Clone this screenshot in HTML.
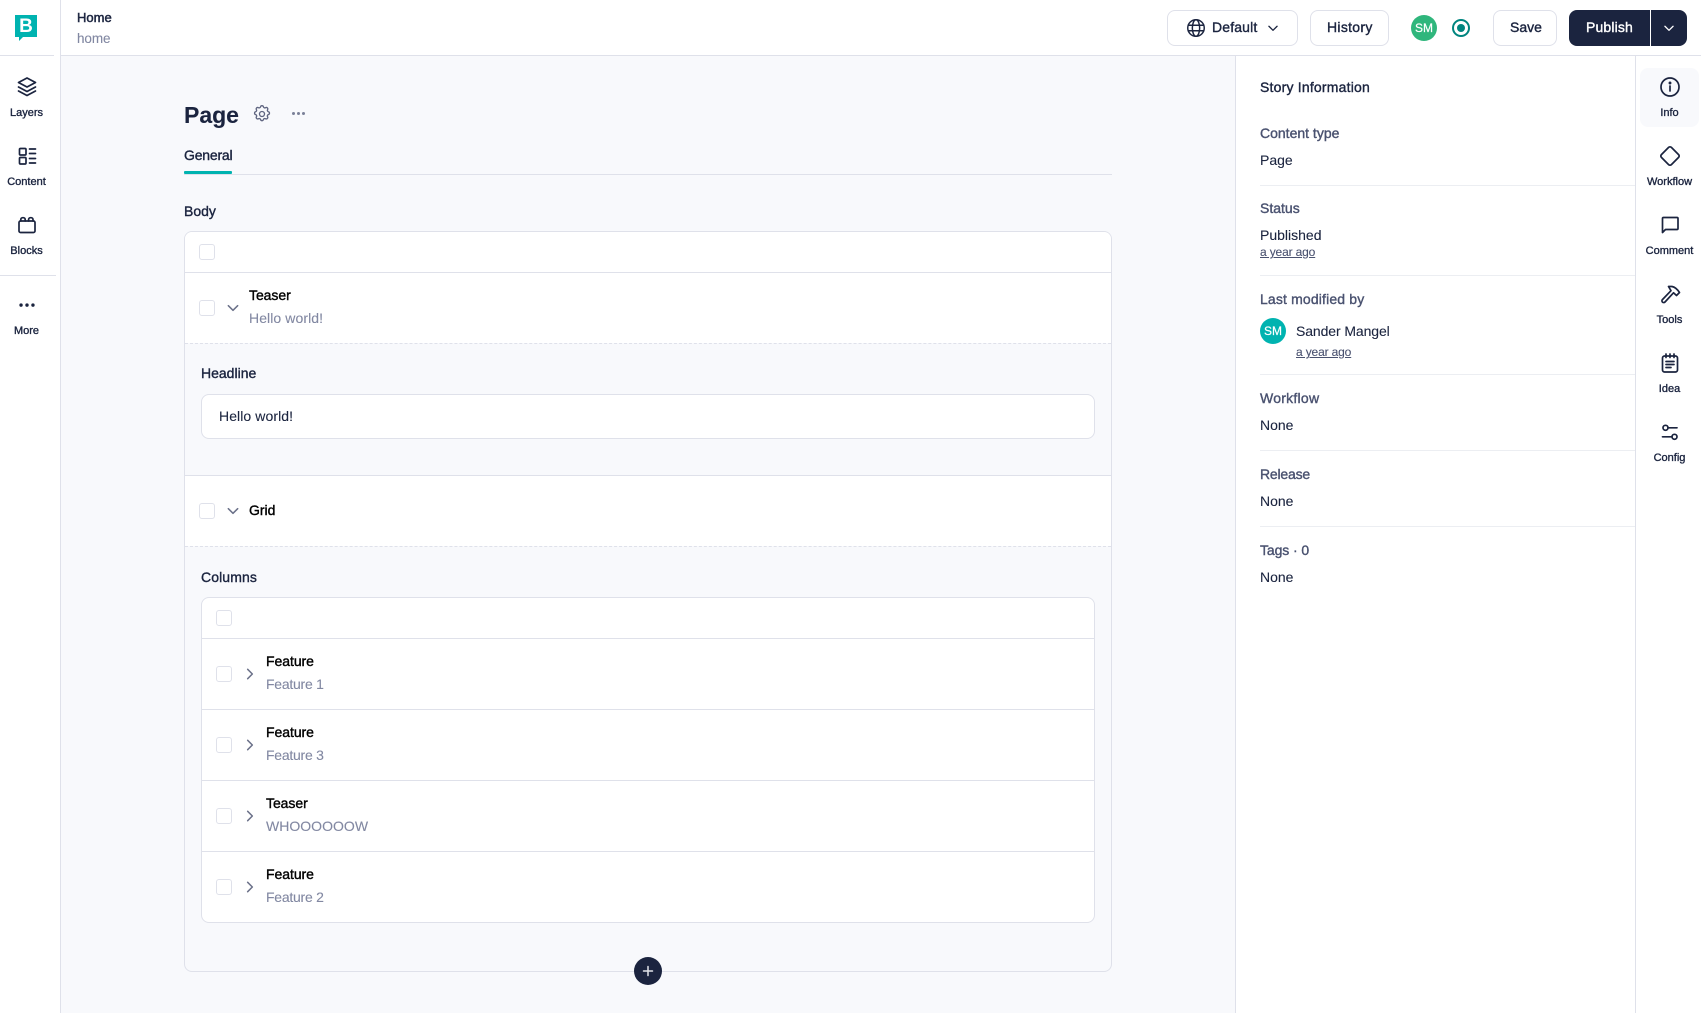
<!DOCTYPE html>
<html lang="en"><head><meta charset="utf-8"><title>Page</title>
<style>
html,body{margin:0;padding:0;width:1701px;height:1013px;overflow:hidden;background:#f8f9fc;font-family:"Liberation Sans",sans-serif;color:#1b243f}
*{box-sizing:border-box}
.a{position:absolute}
.t{position:absolute;white-space:nowrap;transform:translateY(-50%);font-size:14px;line-height:18px;-webkit-text-stroke:.1px currentColor}
.m{-webkit-text-stroke:.38px currentColor}
.k{color:#000}
.g{color:#8288a2;letter-spacing:-.1px}
.l{color:#4a5270}
.c{transform:translate(-50%,-50%);font-size:11px;-webkit-text-stroke:.35px currentColor}
.u{font-size:12px;text-decoration:underline;color:#4a5270;letter-spacing:-.15px}
.b{position:absolute;background:#dfe1ea}
.cb{position:absolute;width:16px;height:16px;border:1px solid #dfe1ea;border-radius:3px;background:#fff}
.btn{position:absolute;top:10px;height:36px;background:#fff;border:1px solid #dfe1ea;border-radius:8px}
svg{position:absolute;overflow:visible;fill:none;stroke:#1b243f;stroke-width:1.7;stroke-linecap:round;stroke-linejoin:round}
.ic{width:22px;height:22px}
.sm{stroke:#6b7189;width:14px;height:14px;stroke-width:2.6}
</style></head><body>

<!-- header -->
<div class="a" style="left:0;top:0;width:1701px;height:56px;background:#fff"></div>
<div class="a" style="left:0;top:56px;width:60px;height:957px;background:#fff"></div>
<div class="b" style="left:60px;top:55px;width:1641px;height:1px"></div>
<div class="b" style="left:0;top:55px;width:54px;height:1px"></div>
<div class="b" style="left:60px;top:0;width:1px;height:1013px"></div>
<div class="b" style="left:0;top:275px;width:56px;height:1px"></div>

<!-- logo -->
<div class="a" style="left:15px;top:15px;width:22px;height:22px;background:#00b3b0"></div>
<div class="a" style="left:19px;top:37px;width:0;height:0;border-top:4px solid #00b3b0;border-right:4px solid transparent"></div>
<div class="a" style="left:15px;top:15px;width:22px;height:22px;line-height:23px;text-align:center;color:#fff;font-weight:700;font-size:19px">B</div>

<div class="t m" style="left:77px;top:18px;font-size:13px;-webkit-text-stroke:.5px currentColor">Home</div>
<div class="t g" style="left:77px;top:39px;font-size:13.5px">home</div>

<!-- left rail -->
<svg class="ic" style="left:16px;top:76px" viewBox="0 0 22 22"><path d="M11 2l-8.500 4.500l8.500 4.500l8.500-4.500z"/><path d="M2.500 11l8.500 4.500l8.500-4.500"/><path d="M2.500 15l8.500 4.500l8.500-4.500"/></svg>
<div class="t c" style="left:26.5px;top:113px">Layers</div>
<svg class="ic" style="left:16px;top:145px" viewBox="0 0 22 22"><rect x="3.500" y="3.500" width="6.500" height="6.500" rx="1"/><rect x="3.500" y="12.500" width="6.500" height="6.500" rx="1"/><path d="M13.500 4h6M13.500 8.500h6M13.500 13.500h6M13.500 18h6"/></svg>
<div class="t c" style="left:26.5px;top:182px">Content</div>
<svg class="ic" style="left:16px;top:214px" viewBox="0 0 22 22"><rect x="3" y="7" width="16" height="11.500" rx="1.500"/><path d="M4.800 7V5.500a1.800 1.800 0 0 1 1.800-1.800h.8a1.800 1.800 0 0 1 1.800 1.800V7M12.600 7V5.500a1.800 1.800 0 0 1 1.800-1.800h.8a1.800 1.800 0 0 1 1.800 1.800V7"/></svg>
<div class="t c" style="left:26.5px;top:251px">Blocks</div>
<svg class="ic" style="left:16px;top:295px" viewBox="0 0 24 24"><circle cx="5.500" cy="11" r="1" fill="#1b243f"/><circle cx="12" cy="11" r="1" fill="#1b243f"/><circle cx="18.500" cy="11" r="1" fill="#1b243f"/></svg>
<div class="t c" style="left:26.5px;top:331px">More</div>

<!-- header right -->
<div class="btn" style="left:1167px;width:131px"></div>
<svg class="ic" style="left:1185px;top:17px;stroke-width:1.6" viewBox="0 0 24 24"><circle cx="12" cy="12" r="9"/><ellipse cx="12" cy="12" rx="4" ry="9"/><path d="M3.500 9h17M3.500 15h17"/></svg>
<div class="t m" style="left:1212px;top:27px;letter-spacing:.15px">Default</div>
<svg class="sm" style="left:1266px;top:21px;stroke:#1b243f;stroke-width:2.2" viewBox="0 0 24 24"><path d="M5 9l7 7l7-7"/></svg>
<div class="btn" style="left:1310px;width:79px"></div>
<div class="t m" style="left:1327px;top:27px;letter-spacing:.3px">History</div>
<div class="a" style="left:1411px;top:15px;width:26px;height:26px;border-radius:50%;background:#2fb67c;color:#fff;font-size:12px;line-height:27px;text-align:center;-webkit-text-stroke:.2px #fff">SM</div>
<div class="a" style="left:1452px;top:19px;width:18px;height:18px;border-radius:50%;border:2px solid #00857f"></div>
<div class="a" style="left:1457px;top:24px;width:8px;height:8px;border-radius:50%;background:#00857f"></div>
<div class="btn" style="left:1493px;width:64px"></div>
<div class="t m" style="left:1510px;top:27px">Save</div>
<div class="a" style="left:1569px;top:10px;width:81px;height:36px;background:#1b243f;border-radius:8px 0 0 8px"></div>
<div class="a" style="left:1651px;top:10px;width:36px;height:36px;background:#1b243f;border-radius:0 8px 8px 0"></div>
<div class="t m" style="left:1586px;top:27px;color:#fff;letter-spacing:.15px">Publish</div>
<svg class="sm" style="left:1662px;top:21px;stroke:#fff;stroke-width:2.2" viewBox="0 0 24 24"><path d="M5 9l7 7l7-7"/></svg>

<!-- right panel -->
<div class="a" style="left:1236px;top:56px;width:465px;height:957px;background:#fff"></div>
<div class="b" style="left:1235px;top:56px;width:1px;height:957px"></div>
<div class="b" style="left:1635px;top:56px;width:1px;height:957px"></div>
<div class="a" style="left:1640px;top:68px;width:59px;height:59px;background:#f8f9fc;border-radius:8px"></div>

<div class="t m" style="left:1260px;top:87px;letter-spacing:.2px">Story Information</div>
<div class="t l m" style="left:1260px;top:133px">Content type</div>
<div class="t" style="left:1260px;top:160px">Page</div>
<div class="a" style="left:1260px;top:185px;width:375px;height:1px;background:#eceef2"></div>
<div class="t l m" style="left:1260px;top:208px">Status</div>
<div class="t" style="left:1260px;top:235px">Published</div>
<div class="t u" style="left:1260px;top:252px">a year ago</div>
<div class="a" style="left:1260px;top:275px;width:375px;height:1px;background:#eceef2"></div>
<div class="t l m" style="left:1260px;top:299px;letter-spacing:.15px">Last modified by</div>
<div class="a" style="left:1260px;top:318px;width:26px;height:26px;border-radius:50%;background:#00b3b0;color:#fff;font-size:12px;line-height:27px;text-align:center;-webkit-text-stroke:.2px #fff">SM</div>
<div class="t" style="left:1296px;top:331px;letter-spacing:-.1px">Sander Mangel</div>
<div class="t u" style="left:1296px;top:352px">a year ago</div>
<div class="a" style="left:1260px;top:374px;width:375px;height:1px;background:#eceef2"></div>
<div class="t l m" style="left:1260px;top:398px;letter-spacing:.25px">Workflow</div>
<div class="t" style="left:1260px;top:425px">None</div>
<div class="a" style="left:1260px;top:450px;width:375px;height:1px;background:#eceef2"></div>
<div class="t l m" style="left:1260px;top:474px;letter-spacing:-.2px">Release</div>
<div class="t" style="left:1260px;top:501px">None</div>
<div class="a" style="left:1260px;top:526px;width:375px;height:1px;background:#eceef2"></div>
<div class="t l m" style="left:1260px;top:550px;letter-spacing:-.1px">Tags · 0</div>
<div class="t" style="left:1260px;top:577px">None</div>

<!-- right rail -->
<svg class="ic" style="left:1659px;top:76px" viewBox="0 0 22 22"><circle cx="11" cy="11" r="9"/><path d="M11 10v5"/><circle cx="11" cy="7" r=".6" fill="#1b243f"/></svg>
<div class="t c" style="left:1669.500px;top:113px">Info</div>
<svg class="ic" style="left:1659px;top:145px" viewBox="0 0 22 22"><path d="M9.600 2.400a2 2 0 0 1 2.800 0l7.200 7.200a2 2 0 0 1 0 2.800l-7.200 7.200a2 2 0 0 1-2.800 0l-7.200-7.200a2 2 0 0 1 0-2.800z"/></svg>
<div class="t c" style="left:1669.500px;top:182px">Workflow</div>
<svg class="ic" style="left:1659px;top:214px" viewBox="0 0 22 22"><path d="M3.500 18.500V4.500a1 1 0 0 1 1-1h13.500a1 1 0 0 1 1 1v10a1 1 0 0 1-1 1H6.500z"/></svg>
<div class="t c" style="left:1669.500px;top:251px">Comment</div>
<svg class="ic" style="left:1659px;top:283px" viewBox="0 0 22 22"><path d="M9.500 3.500h3.500c3 .5 5.500 3 7.500 6l-3 3l-3-2.700l-8.500 9.200a1.700 1.700 0 0 1-2.600-2.400l8.600-8.900z"/></svg>
<div class="t c" style="left:1669.500px;top:320px">Tools</div>
<svg class="ic" style="left:1659px;top:352px" viewBox="0 0 22 22"><rect x="3.500" y="4" width="15" height="16" rx="2"/><path d="M7 2v3.500M11 2v3.500M15 2v3.500M7 9.500h8M7 12.500h8M7 15.500h5"/></svg>
<div class="t c" style="left:1669.500px;top:389px">Idea</div>
<svg class="ic" style="left:1659px;top:421px" viewBox="0 0 22 22"><circle cx="6.500" cy="6.800" r="2.500"/><path d="M9 6.800h9"/><circle cx="15.500" cy="15.800" r="2.500"/><path d="M3.500 15.800h9.500"/></svg>
<div class="t c" style="left:1669.500px;top:458px">Config</div>

<!-- main -->
<div class="t" style="left:184px;top:115px;font-size:23px;line-height:30px;font-weight:700">Page</div>
<svg style="left:252px;top:104px;width:20px;height:20px;stroke:#5f6580;stroke-width:1.600" viewBox="0 0 24 24"><path d="M10.300 3.300c.4-1.700 2.900-1.700 3.400 0a1.700 1.700 0 0 0 2.600 1.100c1.500-.9 3.300.8 2.400 2.400a1.700 1.700 0 0 0 1 2.500c1.700.4 1.700 2.900 0 3.400a1.700 1.700 0 0 0-1 2.600c.9 1.500-.9 3.300-2.400 2.400a1.700 1.700 0 0 0-2.600 1c-.5 1.700-3 1.700-3.400 0a1.700 1.700 0 0 0-2.600-1c-1.500.9-3.300-.9-2.400-2.400a1.700 1.700 0 0 0-1-2.600c-1.700-.5-1.700-3 0-3.400a1.700 1.700 0 0 0 1-2.500c-.9-1.600.9-3.300 2.400-2.400 1 .6 2.300.1 2.600-1.100z"/><circle cx="12" cy="12" r="3"/></svg>
<div class="a" style="left:292px;top:112px;width:3px;height:3px;border-radius:50%;background:#7a8098;box-shadow:5px 0 #7a8098,10px 0 #7a8098"></div>
<div class="t m" style="left:184px;top:155px;letter-spacing:-.2px">General</div>
<div class="b" style="left:184px;top:174px;width:928px;height:1px"></div>
<div class="a" style="left:184px;top:171px;width:48px;height:3px;background:#00b3b0;border-radius:1px"></div>
<div class="t m" style="left:184px;top:211px">Body</div>

<!-- outer card -->
<div class="a" style="left:184px;top:231px;width:928px;height:741px;background:#f8f9fc;border:1px solid #dfe1ea;border-radius:8px"></div>
<div class="a" style="left:185px;top:232px;width:926px;height:40px;background:#fff;border-radius:7px 7px 0 0"></div>
<div class="b" style="left:185px;top:272px;width:926px;height:1px"></div>
<div class="a" style="left:185px;top:273px;width:926px;height:70px;background:#fff"></div>
<div class="a" style="left:185px;top:343px;width:926px;border-top:1px dashed #dfe1ea"></div>
<div class="cb" style="left:199px;top:244px"></div>
<div class="cb" style="left:199px;top:300px"></div>
<svg class="sm" style="left:226px;top:301px" viewBox="0 0 24 24"><path d="M4 8l8 8l8-8"/></svg>
<div class="t k m" style="left:249px;top:295px;letter-spacing:-.05px">Teaser</div>
<div class="t g" style="left:249px;top:318px;letter-spacing:.08px">Hello world!</div>
<div class="t m" style="left:201px;top:373px">Headline</div>
<div class="a" style="left:201px;top:394px;width:894px;height:45px;background:#fff;border:1px solid #dfe1ea;border-radius:8px"></div>
<div class="t" style="left:219px;top:416px;letter-spacing:.08px">Hello world!</div>
<div class="b" style="left:185px;top:475px;width:926px;height:1px"></div>
<div class="a" style="left:185px;top:476px;width:926px;height:70px;background:#fff"></div>
<div class="a" style="left:185px;top:546px;width:926px;border-top:1px dashed #dfe1ea"></div>
<div class="cb" style="left:199px;top:503px"></div>
<svg class="sm" style="left:226px;top:504px" viewBox="0 0 24 24"><path d="M4 8l8 8l8-8"/></svg>
<div class="t k m" style="left:249px;top:510px">Grid</div>
<div class="t m" style="left:201px;top:577px;letter-spacing:.1px">Columns</div>

<!-- inner card -->
<div class="a" style="left:201px;top:597px;width:894px;height:326px;background:#fff;border:1px solid #dfe1ea;border-radius:8px"></div>
<div class="cb" style="left:216px;top:610px"></div>
<div class="b" style="left:202px;top:638px;width:892px;height:1px"></div>
<div class="b" style="left:202px;top:709px;width:892px;height:1px"></div>
<div class="b" style="left:202px;top:780px;width:892px;height:1px"></div>
<div class="b" style="left:202px;top:851px;width:892px;height:1px"></div>

<div class="cb" style="left:216px;top:666px"></div>
<svg class="sm" style="left:243px;top:667px" viewBox="0 0 24 24"><path d="M8 4l8 8l-8 8"/></svg>
<div class="t k m" style="left:266px;top:661px;letter-spacing:-.05px">Feature</div>
<div class="t g" style="left:266px;top:684px;letter-spacing:-.25px">Feature 1</div>

<div class="cb" style="left:216px;top:737px"></div>
<svg class="sm" style="left:243px;top:738px" viewBox="0 0 24 24"><path d="M8 4l8 8l-8 8"/></svg>
<div class="t k m" style="left:266px;top:732px;letter-spacing:-.05px">Feature</div>
<div class="t g" style="left:266px;top:755px;letter-spacing:-.25px">Feature 3</div>

<div class="cb" style="left:216px;top:808px"></div>
<svg class="sm" style="left:243px;top:809px" viewBox="0 0 24 24"><path d="M8 4l8 8l-8 8"/></svg>
<div class="t k m" style="left:266px;top:803px;letter-spacing:-.05px">Teaser</div>
<div class="t g" style="left:266px;top:826px;letter-spacing:.02px">WHOOOOOOW</div>

<div class="cb" style="left:216px;top:879px"></div>
<svg class="sm" style="left:243px;top:880px" viewBox="0 0 24 24"><path d="M8 4l8 8l-8 8"/></svg>
<div class="t k m" style="left:266px;top:874px;letter-spacing:-.05px">Feature</div>
<div class="t g" style="left:266px;top:897px;letter-spacing:-.25px">Feature 2</div>

<!-- plus -->
<div class="a" style="left:634px;top:957px;width:28px;height:28px;border-radius:50%;background:#1b243f"></div>
<svg style="left:641px;top:964px;width:14px;height:14px;stroke:#e2e4ea;stroke-width:1.500" viewBox="0 0 14 14"><path d="M7 2.500v9M2.500 7h9"/></svg>

</body></html>
